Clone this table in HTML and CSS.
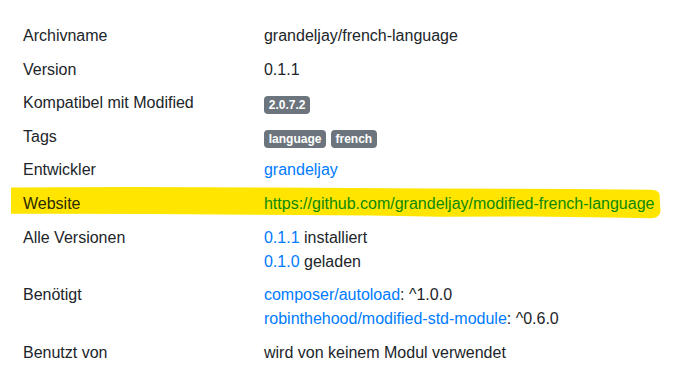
FILE: index.html
```html
<!DOCTYPE html>
<html lang="de">
<head>
<meta charset="utf-8">
<title>Modul Details</title>
<link rel="stylesheet" href="styles.css">
</head>
<body>
<div class="details">
  <div class="row"><div class="key">Archivname</div><div class="val">grandeljay/french-language</div></div>
  <div class="row"><div class="key">Version</div><div class="val">0.1.1</div></div>
  <div class="row"><div class="key">Kompatibel mit Modified</div><div class="val"><span class="badge">2.0.7.2</span></div></div>
  <div class="row"><div class="key">Tags</div><div class="val"><span class="badge">language</span> <span class="badge">french</span></div></div>
  <div class="row"><div class="key">Entwickler</div><div class="val"><a href="#">grandeljay</a></div></div>
  <div class="row marked">
    <svg class="highlight" width="652" height="34" viewBox="0 0 652 34" aria-hidden="true">
      <path d="M0,1.5 L120,1 L260,1.5 L420,2.5 L560,3 L640,3.8 Q647,4 648.5,8 L649.5,25 Q649,31.5 641,32.3 L600,31.5 L520,30.5 L430,30.8 L360,29.5 L250,28.8 L140,28 L40,27.8 L0,27.7 Z" fill="#ffe500"/>
    </svg>
    <div class="key">Website</div><div class="val"><a href="#">https://github.com/grandeljay/modified-french-language</a></div>
  </div>
  <div class="row"><div class="key">Alle Versionen</div><div class="val"><a href="#">0.1.1</a> installiert<br><a href="#">0.1.0</a> geladen</div></div>
  <div class="row"><div class="key">Benötigt</div><div class="val"><a href="#">composer/autoload</a>: ^1.0.0<br><a href="#">robinthehood/modified-std-module</a>: ^0.6.0</div></div>
  <div class="row"><div class="key">Benutzt von</div><div class="val">wird von keinem Modul verwendet</div></div>
</div>
</body>
</html>
```
FILE: styles.css
```css
html, body {
  margin: 0;
  padding: 0;
  background: #ffffff;
}
body {
  padding: 19.2px 0 0 18.2px;
  font-family: "Liberation Sans", Arial, sans-serif;
  font-size: 16px;
  line-height: 1.5;
  color: #212529;
}
.details {
  width: 660px;
  display: flex;
  flex-direction: column;
}
.row {
  display: flex;
  position: relative;
}
.key {
  width: 231.4px;
  flex: none;
  padding: 4.8px;
}
.val {
  flex: 1;
  padding: 4.8px;
}
a {
  color: #007bff;
  text-decoration: none;
}
.badge {
  display: inline-block;
  padding: 3px 4.8px;
  font-size: 12px;
  font-weight: 700;
  line-height: 1;
  color: #ffffff;
  background: #6c757d;
  border-radius: 4px;
  vertical-align: baseline;
  position: relative;
  top: 1.3px;
}
.marked .key, .marked .val {
  position: relative;
}
.marked .key {
  color: #2b2a00;
}
.marked a {
  color: #0d8a06;
}
.highlight {
  position: absolute;
  left: -7.2px;
  top: -1.5px;
}
```
